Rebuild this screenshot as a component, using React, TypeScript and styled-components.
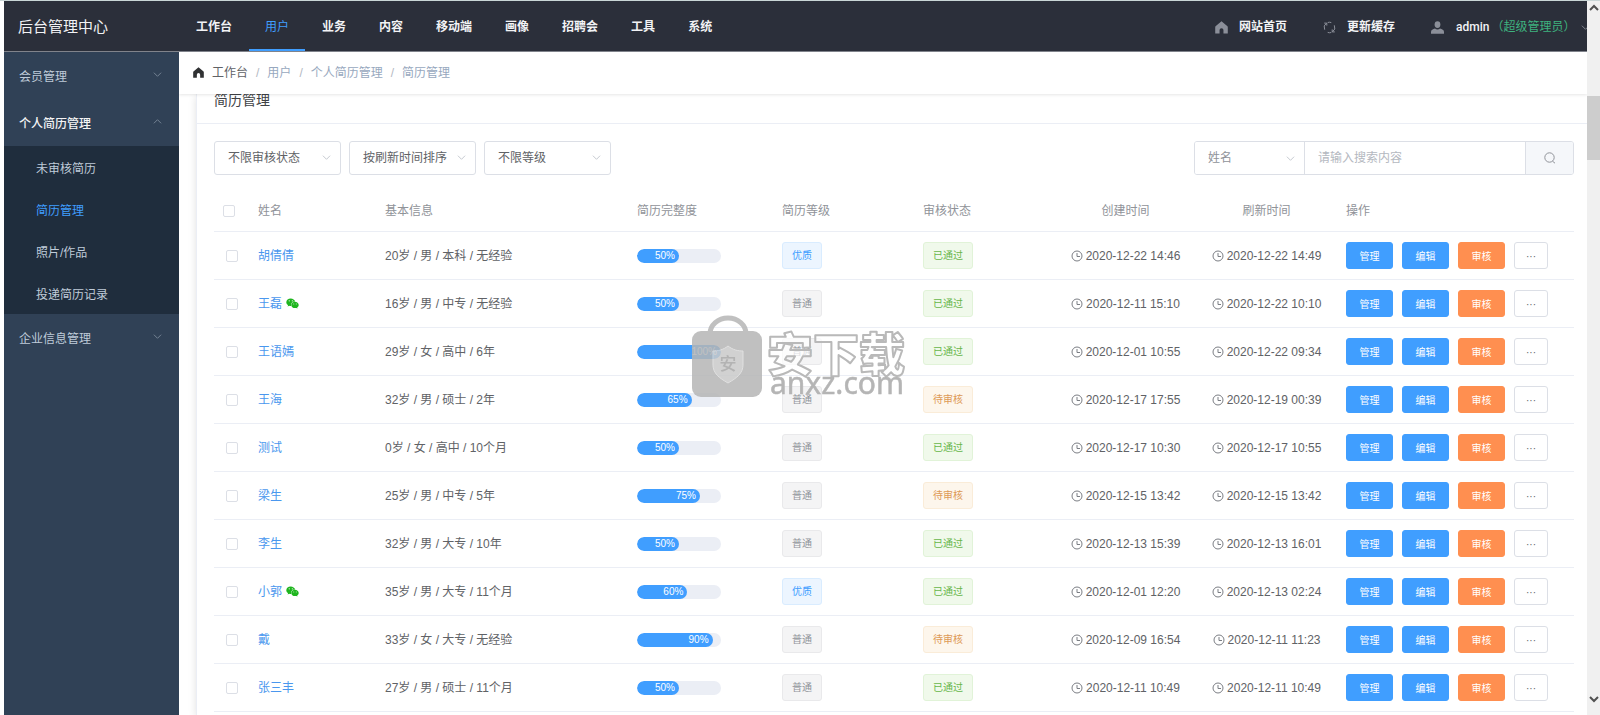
import React from "react";
import styled, { createGlobalStyle } from "styled-components";
import { FaWeixin } from "react-icons/fa";

const Global = createGlobalStyle`
  *, *::before, *::after { box-sizing: border-box; }
  body {
    margin: 0;
    background: #fff;
    color: #606266;
    font: 12px/18px "Liberation Sans", "Noto Sans CJK SC", sans-serif;
  }
  button, input, select { font: inherit; color: inherit; margin: 0; }
  a { color: inherit; text-decoration: none; }
  ul, ol { list-style: none; margin: 0; padding: 0; }
`;

/* ---------- shell ---------- */
const Window = styled.div`
  display: flex;
  height: 100vh;
  overflow: hidden;
  padding-left: 4px;
  border-top: 1px solid #c9d6d6;
`;

const Page = styled.div`
  display: flex;
  flex-direction: column;
  flex: 1;
  min-width: 0;
`;

const Body = styled.div`
  display: flex;
  flex: 1;
  min-height: 0;
`;

/* ---------- top bar ---------- */
const TopBar = styled.header`
  display: flex;
  flex: none;
  height: 51px;
  background: #2b2f3a;
  border-bottom: 1px solid #80838b;
  color: #f2f3f5;
  overflow: hidden;
`;

const Brand = styled.h1`
  flex: none;
  width: 176px;
  margin: 0;
  padding-left: 14px;
  font-size: 15px;
  font-weight: 400;
  line-height: 51px;
`;

const Nav = styled.nav`
  display: flex;
  gap: 1px;
  flex: 1;
`;

const NavLink = styled.a<{ $active?: boolean }>`
  height: 50px;
  padding: 2px 16px 0;
  line-height: 48px;
  font-weight: ${(p) => (p.$active ? 400 : 600)};
  color: ${(p) => (p.$active ? "#409eff" : "inherit")};
  box-shadow: ${(p) => (p.$active ? "inset 0 -2px #409eff" : "none")};
  white-space: nowrap;
`;

const Tools = styled.div`
  display: flex;
  align-items: center;
  gap: 36px;
  padding-top: 2px;
  white-space: nowrap;
`;

const Tool = styled.a`
  display: flex;
  align-items: center;
  gap: 11px;
  font-weight: 600;
  svg { color: #8b8f99; }
`;

const UserButton = styled.button`
  display: flex;
  align-items: center;
  width: 156px;
  padding: 0;
  border: 0;
  background: none;
  overflow: hidden;
  svg { flex: none; color: #8b8f99; }
`;

const UserName = styled.span`
  margin: 0 2px 0 12px;
  font-family: Roboto, sans-serif;
  font-weight: 500;
`;

const Role = styled.span`
  color: #3eb27f;
  margin-right: 6px;
`;

/* ---------- side menu ---------- */
const SideMenu = styled.aside`
  flex: none;
  width: 175px;
  background: #304156;
  color: #bfcbd9;
`;

const Group = styled.button<{ $open?: boolean }>`
  display: flex;
  align-items: center;
  justify-content: space-between;
  width: 100%;
  height: 47px;
  padding: 2px 17px 0 15px;
  border: 0;
  background: none;
  color: ${(p) => (p.$open ? "#f4f4f5" : "#bfcbd9")};
  font-weight: ${(p) => (p.$open ? 500 : 400)};
  text-align: left;
  svg { color: #7c8a9b; margin-bottom: 4px; }
`;

const SubMenu = styled.ul`
  background: #1f2d3d;
`;

const SubLink = styled.a<{ $active?: boolean }>`
  display: block;
  padding: 4px 0 0 32px;
  line-height: 38px;
  color: ${(p) => (p.$active ? "#409eff" : "#bfcbd9")};
`;

/* ---------- main area ---------- */
const Main = styled.main`
  display: flex;
  flex-direction: column;
  flex: 1;
  min-width: 0;
  overflow: hidden;
`;

const Crumbs = styled.ol`
  position: relative;
  z-index: 1;
  display: flex;
  align-items: center;
  flex: none;
  height: 42px;
  padding-left: 14px;
  background: #fff;
  box-shadow: 0 1px 3px rgba(0, 0, 0, 0.1);
  color: #97a8be;
  svg { color: #303133; margin: 0 8px 2px 0; }
`;

const Crumb = styled.li<{ $root?: boolean }>`
  color: ${(p) => (p.$root ? "#606266" : "inherit")};
  &:not(:last-child)::after {
    content: "/";
    margin: 0 8px;
    color: #b3b8c2;
  }
`;

const Card = styled.section`
  flex: 1;
  margin-left: 17px;
  border-left: 1px solid #ebeef5;
  box-shadow: 0 2px 8px rgba(0, 0, 0, 0.12);
`;

const CardTitle = styled.h2`
  height: 30px;
  margin: 0;
  padding-left: 17px;
  border-bottom: 1px solid #ebeef5;
  color: #404246;
  font-size: 14px;
  font-weight: 400;
  line-height: 12px;
`;

const CardBody = styled.div`
  padding: 17px 13px 0 17px;
`;

const Filters = styled.form`
  display: flex;
  gap: 8px;
  margin-bottom: 15px;
`;

const SelectBox = styled.div`
  position: relative;
  width: 127px;
  svg {
    position: absolute;
    right: 10px;
    top: 12px;
    color: #c0c4cc;
    pointer-events: none;
  }
`;

const Select = styled.select`
  appearance: none;
  width: 100%;
  height: 34px;
  padding: 0 24px 0 13px;
  border: 1px solid #dcdfe6;
  border-radius: 3px;
  background: #fff;
`;

const Search = styled.div`
  display: flex;
  width: 380px;
  height: 34px;
  margin-left: auto;
  border: 1px solid #dcdfe6;
  border-radius: 3px;
  overflow: hidden;
  ${SelectBox} { width: 110px; color: #909399; }
  ${Select} { height: 32px; border: 0; border-right: 1px solid #dcdfe6; border-radius: 0; }
`;

const SearchInput = styled.input`
  flex: 1;
  min-width: 0;
  padding: 0 13px;
  border: 0;
  &::placeholder { color: #b4b8c0; }
`;

const SearchButton = styled.button`
  display: flex;
  align-items: center;
  justify-content: center;
  width: 48px;
  border: 0;
  border-left: 1px solid #dcdfe6;
  background: #f5f7fa;
  color: #909399;
`;

/* ---------- table ---------- */
const Table = styled.table`
  width: 100%;
  table-layout: fixed;
  border-collapse: separate;
  border-spacing: 0;
`;

const Col = styled.col<{ $w?: number }>`
  width: ${(p) => (p.$w ? `${p.$w}px` : "auto")};
`;

const Th = styled.th<{ $center?: boolean }>`
  height: 42px;
  padding: 0 9px;
  border-bottom: 1px solid #ebeef5;
  color: #909399;
  font-weight: 400;
  text-align: ${(p) => (p.$center ? "center" : "left")};
`;

const Td = styled.td<{ $check?: boolean; $center?: boolean }>`
  height: 48px;
  padding: 0 9px 0 ${(p) => (p.$check ? 12 : 9)}px;
  border-bottom: 1px solid #ebeef5;
  text-align: ${(p) => (p.$center ? "center" : "left")};
  white-space: nowrap;
`;

const Check = styled.input`
  appearance: none;
  display: block;
  width: 12px;
  height: 12px;
  border: 1px solid #dcdfe6;
  border-radius: 2px;
  background: #fff;
`;

const PersonLink = styled.a`
  display: flex;
  align-items: center;
  gap: 4px;
  color: #4a97ee;
  svg { color: #1eb51e; }
`;

const Track = styled.div`
  width: 84px;
  height: 14px;
  border-radius: 7px;
  background: #ebeef5;
  overflow: hidden;
`;

const Fill = styled.div`
  height: 14px;
  padding-right: 4px;
  border-radius: 7px;
  background: #409eff;
  color: #fff;
  font-size: 10px;
  line-height: 14px;
  text-align: right;
`;

const tones = {
  blue: { fill: "#ecf5ff", line: "#d9ecff", text: "#409eff" },
  gray: { fill: "#f4f4f5", line: "#e9e9eb", text: "#909399" },
  green: { fill: "#f0f9eb", line: "#e1f3d8", text: "#67b64a" },
  orange: { fill: "#fdf6ec", line: "#faecd8", text: "#dd9a56" },
};
type Tone = keyof typeof tones;

const Tag = styled.span<{ $tone: Tone }>`
  display: inline-block;
  height: 27px;
  padding: 0 9px;
  border: 1px solid ${(p) => tones[p.$tone].line};
  border-radius: 3px;
  background: ${(p) => tones[p.$tone].fill};
  color: ${(p) => tones[p.$tone].text};
  font-size: 10px;
  line-height: 25px;
  vertical-align: middle;
`;

const Time = styled.time`
  display: flex;
  align-items: center;
  justify-content: center;
  gap: 3px;
`;

const Actions = styled.div`
  display: flex;
  gap: 9px;
`;

const kinds = {
  primary: { fill: "#409eff", line: "#409eff", text: "#fff", width: 47 },
  warn: { fill: "#ff8f50", line: "#ff8f50", text: "#fff", width: 47 },
  plain: { fill: "#fff", line: "#dcdfe6", text: "#606266", width: 34 },
};

const Action = styled.button<{ $kind: keyof typeof kinds }>`
  width: ${(p) => kinds[p.$kind].width}px;
  height: 27px;
  padding: 2px 0 0;
  border: 1px solid ${(p) => kinds[p.$kind].line};
  border-radius: 3px;
  background: ${(p) => kinds[p.$kind].fill};
  color: ${(p) => kinds[p.$kind].text};
  font-size: 10px;
  line-height: 20px;
`;

/* ---------- scroll bar and watermark ---------- */
const ScrollBar = styled.div`
  display: flex;
  flex-direction: column;
  flex: none;
  align-items: center;
  width: 13px;
  padding: 2px 0 11px;
  background: #f0f0f0;
  color: #505050;
`;

const Thumb = styled.div`
  width: 13px;
  height: 64px;
  margin: 83px 0 auto;
  background: #cdcdcd;
`;

const Watermark = styled.div`
  position: fixed;
  left: 50%;
  top: 50%;
  transform: translate(-50%, -50%);
  z-index: 2;
  pointer-events: none;
  svg { display: block; }
`;

/* ---------- drawings ---------- */
const Chevron = ({ up, size = 9, width = 1 }: { up?: boolean; size?: number; width?: number }) => (
  <svg width={size} height={size} viewBox="0 0 10 10" fill="none" stroke="currentColor" strokeWidth={width} aria-hidden="true">
    <path d={up ? "M1 7l4-4 4 4" : "M1 3l4 4 4-4"} />
  </svg>
);

const HomeIcon = ({ size }: { size: number }) => (
  <svg width={size} height={size} viewBox="0 0 12 12" fill="currentColor" aria-hidden="true">
    <path d="M6 0.3 0.500 4.900a1 1 0 0 0-.3.8V11.600H4.200V8.400a1.800 1.800 0 0 1 3.600 0v3.200h4V5.700a1 1 0 0 0-.3-.8z" />
  </svg>
);

const RefreshIcon = () => (
  <svg width="13" height="13" viewBox="0 0 13 13" fill="none" stroke="currentColor" aria-hidden="true">
    <path d="M1.700 8.700A5.200 5.200 0 0 1 3.600 2.100M4.700 11.400a5.200 5.200 0 0 0 3.600.1" />
    <path d="M11.300 4.300a5.200 5.200 0 0 1-1.900 6.600M8.300 1.600a5.200 5.200 0 0 0-3.600-.1" />
    <path d="M1.200 2.100h2.600v2.500M11.800 10.900H9.200V8.400" />
  </svg>
);

const UserIcon = () => (
  <svg width="13" height="13" viewBox="0 0 13 13" fill="currentColor" aria-hidden="true">
    <ellipse cx="6.500" cy="3.600" rx="2.900" ry="3.400" />
    <path d="M0 12.800V11c0-2 2-2.800 4-3.400.6.500 1.500.9 2.500.9s1.900-.4 2.500-.9c2 .6 4 1.400 4 3.400v1.800z" />
  </svg>
);

const ClockIcon = () => (
  <svg width="12" height="12" viewBox="0 0 12 12" fill="none" stroke="#7b7e84" aria-hidden="true">
    <circle cx="6" cy="6" r="5" />
    <path d="M6 3v3.500h3" />
  </svg>
);

const SearchIcon = () => (
  <svg width="12" height="12" viewBox="0 0 12 12" fill="none" stroke="currentColor" aria-hidden="true">
    <circle cx="5.500" cy="5.500" r="4.700" />
    <path d="M8.500 9.200l2.500 2" />
  </svg>
);

const WatermarkArt = () => (
  <svg width="216" height="84" viewBox="0 0 216 84" overflow="visible" aria-label="安下载 anxz.com">
    <g opacity="0.85">
      <path d="M18 18a18 16 0 0 1 36 0" fill="none" stroke="#b5b5b5" strokeWidth="5" />
      <rect x="0" y="15" width="70" height="66" rx="9" fill="#b5b5b5" />
      <path d="M36 30c5 4 10 5 15 5v14c0 8-6 13-15 18-9-5-15-10-15-18V35c5 0 10-1 15-5z" fill="#c9c9c9" stroke="#dcdcdc" />
      <text x="36" y="54" fontSize="17" textAnchor="middle" fill="#a6a6a6" fontFamily="Noto Sans CJK SC, sans-serif" fontWeight="500">安</text>
    </g>
    <text x="75" y="55" fontSize="46" fontWeight="900" fill="#fff" fillOpacity="0.7" stroke="#b9b9b9" strokeWidth="2" strokeLinejoin="round" fontFamily="Noto Sans CJK SC, sans-serif">安下载</text>
    <text x="78" y="78" fontSize="30" fill="#b5b5b5" stroke="#b5b5b5" strokeWidth="0.500" fontFamily="Noto Sans, sans-serif">anxz.com</text>
  </svg>
);

/* ---------- data ---------- */
const navItems = ["工作台", "用户", "业务", "内容", "移动端", "画像", "招聘会", "工具", "系统"];
const subItems = ["未审核简历", "简历管理", "照片/作品", "投递简历记录"];
const filters = [
  ["审核状态", "不限审核状态"],
  ["排序", "按刷新时间排序"],
  ["等级", "不限等级"],
];

interface Resume {
  name: string;
  wechat?: boolean;
  info: string;
  done: number;
  good?: boolean;
  pending?: boolean;
  created: string;
  refreshed: string;
}

const rows: Resume[] = [
  { name: "胡倩倩", info: "20岁 / 男 / 本科 / 无经验", done: 50, good: true, created: "2020-12-22 14:46", refreshed: "2020-12-22 14:49" },
  { name: "王磊", wechat: true, info: "16岁 / 男 / 中专 / 无经验", done: 50, created: "2020-12-11 15:10", refreshed: "2020-12-22 10:10" },
  { name: "王语嫣", info: "29岁 / 女 / 高中 / 6年", done: 100, created: "2020-12-01 10:55", refreshed: "2020-12-22 09:34" },
  { name: "王海", info: "32岁 / 男 / 硕士 / 2年", done: 65, pending: true, created: "2020-12-17 17:55", refreshed: "2020-12-19 00:39" },
  { name: "测试", info: "0岁 / 女 / 高中 / 10个月", done: 50, created: "2020-12-17 10:30", refreshed: "2020-12-17 10:55" },
  { name: "梁生", info: "25岁 / 男 / 中专 / 5年", done: 75, pending: true, created: "2020-12-15 13:42", refreshed: "2020-12-15 13:42" },
  { name: "李生", info: "32岁 / 男 / 大专 / 10年", done: 50, created: "2020-12-13 15:39", refreshed: "2020-12-13 16:01" },
  { name: "小郭", wechat: true, info: "35岁 / 男 / 大专 / 11个月", done: 60, good: true, created: "2020-12-01 12:20", refreshed: "2020-12-13 02:24" },
  { name: "戴", info: "33岁 / 女 / 大专 / 无经验", done: 90, pending: true, created: "2020-12-09 16:54", refreshed: "2020-12-11 11:23" },
  { name: "张三丰", info: "27岁 / 男 / 硕士 / 11个月", done: 50, created: "2020-12-11 10:49", refreshed: "2020-12-11 10:49" },
];

const ResumeRow = ({ r }: { r: Resume }) => (
  <tr>
    <Td $check><Check type="checkbox" aria-label={`选择${r.name}`} /></Td>
    <Td><PersonLink href="#">{r.name}{r.wechat && <FaWeixin size={13} />}</PersonLink></Td>
    <Td>{r.info}</Td>
    <Td><Track><Fill style={{ width: `${r.done}%` }}>{r.done}%</Fill></Track></Td>
    <Td><Tag $tone={r.good ? "blue" : "gray"}>{r.good ? "优质" : "普通"}</Tag></Td>
    <Td><Tag $tone={r.pending ? "orange" : "green"}>{r.pending ? "待审核" : "已通过"}</Tag></Td>
    <Td $center><Time><ClockIcon />{r.created}</Time></Td>
    <Td $center><Time><ClockIcon />{r.refreshed}</Time></Td>
    <Td>
      <Actions>
        <Action type="button" $kind="primary">管理</Action>
        <Action type="button" $kind="primary">编辑</Action>
        <Action type="button" $kind="warn">审核</Action>
        <Action type="button" $kind="plain">···</Action>
      </Actions>
    </Td>
  </tr>
);

export default function App() {
  return (
    <>
      <Global />
      <Window>
        <Page>
          <TopBar>
            <Brand>后台管理中心</Brand>
            <Nav>
              {navItems.map((n) => <NavLink key={n} href="#" $active={n === "用户"}>{n}</NavLink>)}
            </Nav>
            <Tools>
              <Tool href="#"><HomeIcon size={13} />网站首页</Tool>
              <Tool href="#"><RefreshIcon />更新缓存</Tool>
              <UserButton type="button">
                <UserIcon />
                <UserName>admin</UserName>
                <Role>（超级管理员）</Role>
                <Chevron />
              </UserButton>
            </Tools>
          </TopBar>
          <Body>
            <SideMenu>
              <Group type="button">会员管理<Chevron /></Group>
              <Group type="button" $open>个人简历管理<Chevron up /></Group>
              <SubMenu>
                {subItems.map((s) => <li key={s}><SubLink href="#" $active={s === "简历管理"}>{s}</SubLink></li>)}
              </SubMenu>
              <Group type="button">企业信息管理<Chevron /></Group>
            </SideMenu>
            <Main>
              <Crumbs>
                <HomeIcon size={11} />
                <Crumb $root><a href="#">工作台</a></Crumb>
                <Crumb>用户</Crumb>
                <Crumb>个人简历管理</Crumb>
                <Crumb>简历管理</Crumb>
              </Crumbs>
              <Card>
                <CardTitle>简历管理</CardTitle>
                <CardBody>
                  <Filters>
                    {filters.map(([label, value]) => (
                      <SelectBox key={label}>
                        <Select aria-label={label}><option>{value}</option></Select>
                        <Chevron />
                      </SelectBox>
                    ))}
                    <Search>
                      <SelectBox>
                        <Select aria-label="搜索字段"><option>姓名</option></Select>
                        <Chevron />
                      </SelectBox>
                      <SearchInput aria-label="搜索内容" placeholder="请输入搜索内容" />
                      <SearchButton type="button" aria-label="搜索"><SearchIcon /></SearchButton>
                    </Search>
                  </Filters>
                  <Table>
                    <colgroup>
                      <Col $w={35} /><Col $w={127} /><Col /><Col $w={145} /><Col $w={141} />
                      <Col $w={141} /><Col $w={141} /><Col $w={141} /><Col $w={237} />
                    </colgroup>
                    <thead>
                      <tr>
                        <Th><Check type="checkbox" aria-label="全选" /></Th>
                        <Th>姓名</Th>
                        <Th>基本信息</Th>
                        <Th>简历完整度</Th>
                        <Th>简历等级</Th>
                        <Th>审核状态</Th>
                        <Th $center>创建时间</Th>
                        <Th $center>刷新时间</Th>
                        <Th>操作</Th>
                      </tr>
                    </thead>
                    <tbody>
                      {rows.map((r) => <ResumeRow key={r.name} r={r} />)}
                    </tbody>
                  </Table>
                </CardBody>
              </Card>
            </Main>
          </Body>
        </Page>
        <ScrollBar>
          <Chevron up size={10} width={2} />
          <Thumb />
          <Chevron size={10} width={2} />
        </ScrollBar>
      </Window>
      <Watermark><WatermarkArt /></Watermark>
    </>
  );
}
